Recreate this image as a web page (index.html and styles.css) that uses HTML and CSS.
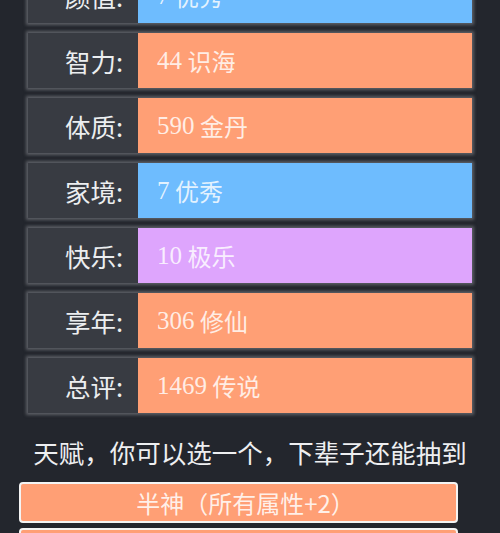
FILE: index.html
```html
<!DOCTYPE html>
<html lang="zh">
<head>
<meta charset="utf-8">
<link rel="stylesheet" href="styles.css">
</head>
<body>
<div class="page">
  <div class="rows">
    <div class="row"><div class="label">颜值:</div><div class="value blue"><span class="num">7</span> 优秀</div></div>
    <div class="row"><div class="label">智力:</div><div class="value orange"><span class="num">44</span> 识海</div></div>
    <div class="row"><div class="label">体质:</div><div class="value orange"><span class="num">590</span> 金丹</div></div>
    <div class="row"><div class="label">家境:</div><div class="value blue"><span class="num">7</span> 优秀</div></div>
    <div class="row"><div class="label">快乐:</div><div class="value purple"><span class="num">10</span> 极乐</div></div>
    <div class="row"><div class="label">享年:</div><div class="value orange"><span class="num">306</span> 修仙</div></div>
    <div class="row"><div class="label">总评:</div><div class="value orange"><span class="num">1469</span> 传说</div></div>
  </div>
  <div class="title">天赋，你可以选一个，下辈子还能抽到</div>
  <div class="talents">
    <div class="talent">半神（所有属性+2）</div>
    <div class="talent"></div>
  </div>
</div>
</body>
</html>
```
FILE: styles.css
```css
html, body {
  margin: 0;
  padding: 0;
  background: #23262d;
  overflow: hidden;
}
body {
  width: 500px;
  height: 533px;
  font-family: "Noto Sans CJK SC", "Noto Sans", sans-serif;
}
.page {
  display: flex;
  flex-direction: column;
}
.rows {
  margin: -32px 28px 0 28px;
  display: flex;
  flex-direction: column;
  gap: 10px;
}
.row {
  height: 55px;
  display: flex;
  box-shadow: 0 0 3px 2px rgba(150, 152, 158, 0.5);
}
.label {
  width: 110px;
  flex: none;
  background: #383b42;
  color: #eceef0;
  font-size: 25.5px;
  display: flex;
  align-items: center;
  justify-content: flex-end;
  padding-right: 15px;
  box-sizing: border-box;
}
.value {
  flex: 1;
  display: flex;
  align-items: center;
  padding-left: 19px;
  font-size: 24px;
  color: rgba(255, 255, 255, 0.82);
  white-space: pre;
}
.num {
  font-family: "Liberation Serif", serif;
  font-size: 25px;
}
.orange { background: #ff9f75; }
.blue { background: #6ebcfe; }
.purple { background: #dea5fd; }
.title {
  margin-top: 22px;
  text-align: center;
  color: #eeeff1;
  font-size: 25.5px;
  line-height: 34px;
}
.talents {
  margin: 13px 0 0 19px;
  width: 439px;
  display: flex;
  flex-direction: column;
  gap: 5px;
}
.talent {
  height: 41px;
  box-sizing: border-box;
  border: 2px solid #f4f4f4;
  border-radius: 4px;
  background: #ff9f75;
  color: rgba(255, 255, 255, 0.85);
  font-size: 24px;
  padding-left: 14px;
  display: flex;
  align-items: center;
  justify-content: center;
}
```
